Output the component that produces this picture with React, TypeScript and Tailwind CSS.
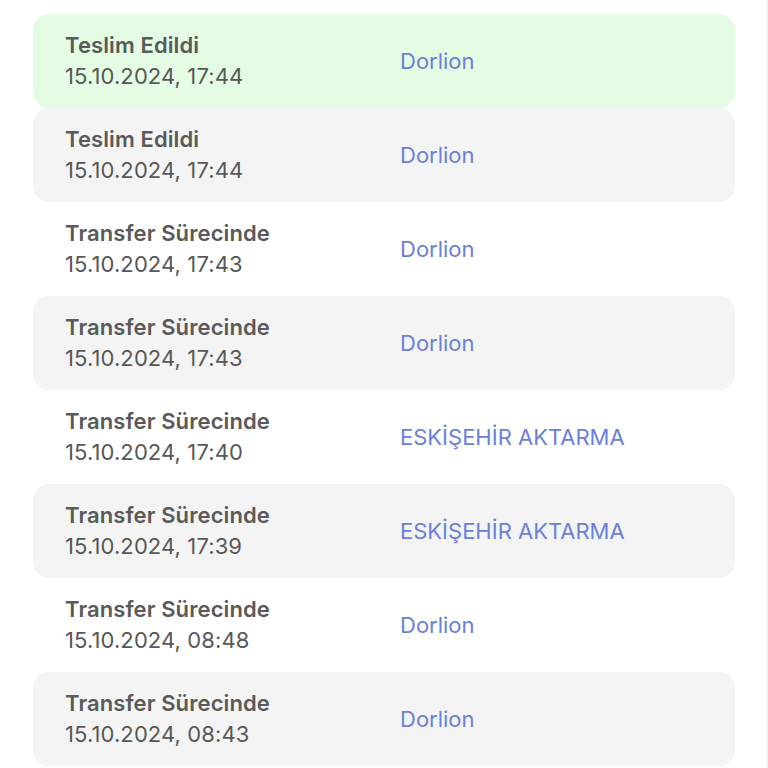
import React from 'react';

type Movement = {
  status: string;
  date: string;
  location: string;
};

const movements: Movement[] = [
  { status: 'Teslim Edildi', date: '15.10.2024, 17:44', location: 'Dorlion' },
  { status: 'Teslim Edildi', date: '15.10.2024, 17:44', location: 'Dorlion' },
  { status: 'Transfer Sürecinde', date: '15.10.2024, 17:43', location: 'Dorlion' },
  { status: 'Transfer Sürecinde', date: '15.10.2024, 17:43', location: 'Dorlion' },
  { status: 'Transfer Sürecinde', date: '15.10.2024, 17:40', location: 'ESKİŞEHİR AKTARMA' },
  { status: 'Transfer Sürecinde', date: '15.10.2024, 17:39', location: 'ESKİŞEHİR AKTARMA' },
  { status: 'Transfer Sürecinde', date: '15.10.2024, 08:48', location: 'Dorlion' },
  { status: 'Transfer Sürecinde', date: '15.10.2024, 08:43', location: 'Dorlion' },
];

export default function App() {
  return (
    <div
      className="min-h-[768px] bg-white pt-[14px] pl-[33px] pr-8 border-r border-[#eeeeee]"
      style={{ fontFamily: 'Inter, "Noto Sans", sans-serif' }}
    >
      {movements.map((item, index) => {
        const bg =
          index === 0 ? 'bg-[#e3fce3]' : index % 2 === 1 ? 'bg-[#f4f4f4]' : 'bg-white';
        return (
          <div
            key={`${item.date}-${index}`}
            className={`flex items-center h-[94px] rounded-2xl px-8 ${bg}`}
          >
            <div className="w-[335px] shrink-0 flex flex-col">
              <span className="text-[22px] leading-[31px] font-semibold text-[#5a5a5a] tracking-[0.1px]">
                {item.status}
              </span>
              <span className="text-[22px] leading-[31px] text-[#585858] tracking-[0.1px]">
                {item.date}
              </span>
            </div>
            <span className="text-[22px] leading-[31px] pt-px text-[#6b80d8]">{item.location}</span>
          </div>
        );
      })}
    </div>
  );
}
